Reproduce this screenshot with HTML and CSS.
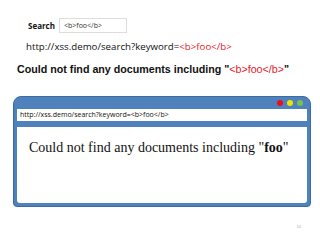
FILE: index.html
```html
<!DOCTYPE html>
<html lang="en">
<head>
    <meta charset="UTF-8">
    <title>XSS Demo</title>
    <link rel="stylesheet" href="styles.css">
</head>
<body>
    <div class="slide">
        <div class="search-row">
            <span class="search-label">Search</span>
            <div class="search-box">&lt;b&gt;foo&lt;/b&gt;</div>
        </div>

        <div class="url-line">http://xss.demo/search?keyword=<span class="red">&lt;b&gt;foo&lt;/b&gt;</span></div>

        <div class="result-line">Could not find any documents including "<span class="red plain">&lt;b&gt;foo&lt;/b&gt;</span>"</div>

        <div class="browser">
            <div class="dots">
                <span class="dot dot-red"></span>
                <span class="dot dot-yellow"></span>
                <span class="dot dot-green"></span>
            </div>
            <div class="address">http://xss.demo/search?keyword=&lt;b&gt;foo&lt;/b&gt;</div>
            <div class="page">
                <p>Could not find any documents including "<b>foo</b>"</p>
            </div>
        </div>

        <div class="page-num">10</div>
    </div>
</body>
</html>
```

FILE: styles.css
```css
body {
    margin: 0;
    background: #fff;
    font-family: "Liberation Sans", Arial, sans-serif;
}
.slide {
    width: 320px;
    height: 240px;
    position: relative;
}
.search-row {
    display: flex;
    align-items: center;
    padding: 18px 0 0 28px;
    height: 14px;
}
.search-label {
    font-family: "Open Sans", sans-serif;
    font-weight: bold;
    font-size: 8px;
    color: #111;
    width: 31px;
}
.search-box {
    width: 62px;
    height: 13px;
    border: 1px solid #ddd;
    font-family: "Open Sans", sans-serif;
    font-size: 7px;
    color: #333;
    padding-left: 4px;
    line-height: 13px;
}
.url-line {
    font-family: "Open Sans", sans-serif;
    font-size: 9.7px;
    color: #111;
    margin: 7px 0 0 26px;
    line-height: 16px;
}
.red {
    color: #e8202a;
}
.result-line {
    font-weight: bold;
    font-size: 10.7px;
    color: #111;
    margin: 8px 0 0 17px;
    line-height: 12px;
}
.plain {
    font-weight: normal;
}
.browser {
    margin: 21px 0 0 13px;
    width: 290px;
    background: #4f81bd;
    border: 1px solid #3c6aa2;
    border-radius: 8px 8px 4px 4px;
    padding: 0 3px 3px 3px;
}
.dots {
    display: flex;
    justify-content: flex-end;
    gap: 4px;
    height: 12px;
    align-items: center;
    padding-right: 4px;
}
.dot {
    width: 6px;
    height: 6px;
    border-radius: 50%;
}
.dot-red { background: #e8101a; }
.dot-yellow { background: #f2e200; }
.dot-green { background: #7cc24a; }
.address {
    background: #fff;
    height: 12px;
    line-height: 12px;
    font-family: "Open Sans", sans-serif;
    font-size: 7px;
    color: #111;
    padding-left: 3px;
    margin-bottom: 6px;
}
.page {
    background: #fff;
    height: 76px;
    border-radius: 0 0 3px 3px;
}
.page p {
    margin: 0;
    padding: 13px 0 0 12px;
    font-family: "Liberation Serif", serif;
    font-size: 14px;
    color: #111;
}
.page-num {
    position: absolute;
    right: 19px;
    top: 224px;
    font-size: 4px;
    color: #aaa;
}
```
